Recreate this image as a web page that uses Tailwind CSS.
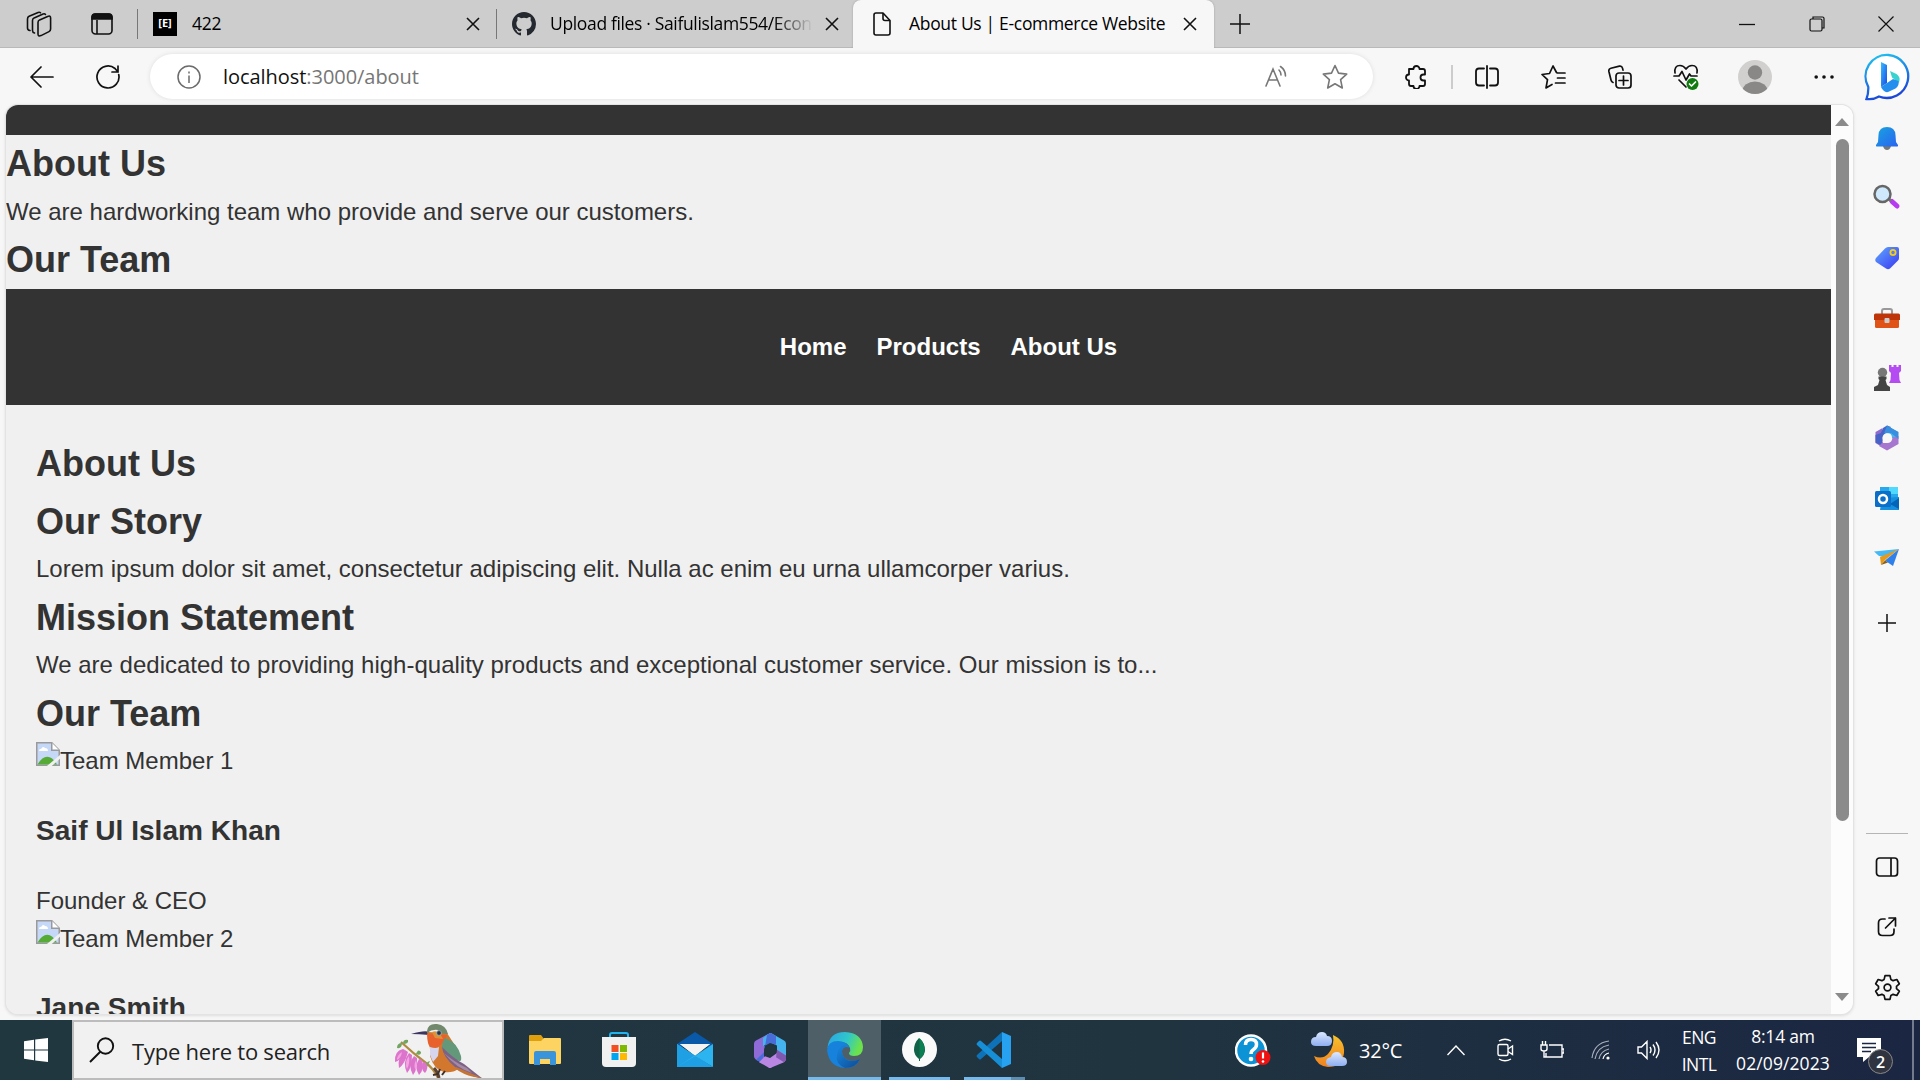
<!DOCTYPE html>
<html lang="en">
<head>
<meta charset="utf-8">
<title>About Us | E-commerce Website</title>
<script src="https://cdn.jsdelivr.net/npm/@tailwindcss/browser@4"></script>
</head>
<body class="w-[1920px] h-[1080px] overflow-hidden bg-[#f7f7f7] font-['Open_Sans',sans-serif] text-black flex flex-col">

<!-- Tab strip -->
<header class="h-12 shrink-0 bg-[#cdcdcd] flex items-center border-b border-[#b9b9b9] relative">
  <svg class="ml-[26px] w-[26px] h-[26px] shrink-0" viewBox="0 0 26 26" fill="none" stroke="#111" stroke-width="1.6" stroke-linejoin="round" stroke-linecap="round"><path d="M12 11.5q0-1.8 1.6-2.6l8-3.5q3-1.2 3 1.6v11q0 1.8-1.6 2.6l-8 4q-3 1.2-3-1.6z"/><path d="M8.500 22q-2-.6-2-2.600v-9.900q0-1.800 1.600-2.600l9-4q1.600-.5 2.400.5"/><path d="M4 19.500q-2.500-.5-2.500-2.600v-9q0-1.800 1.600-2.600l9-3.800q1.600-.5 2.400.3"/></svg>
  <svg class="ml-[39px] w-[22px] h-[22px] shrink-0" viewBox="0 0 22 22" fill="none" stroke="#111" stroke-width="1.6"><rect x="1" y="1" width="20" height="20" rx="3.500"/><path d="M1 6V4q0-3 3-3h14q3 0 3 3v2z" fill="#111"/><path d="M6 7v14"/></svg>
  <div class="ml-6 w-px h-[30px] bg-[#777] shrink-0"></div>
  <div class="ml-[15px] size-6 bg-black text-white font-bold text-[11px] flex items-center justify-center shrink-0">[E]</div>
  <div class="ml-[15px] w-[274px] text-[17.500px] tracking-[-0.300px] shrink-0">422</div>
  <svg class="w-[14px] h-[14px] shrink-0" viewBox="0 0 14 14" stroke="#111" stroke-width="1.6"><path d="M1 1l12 12M13 1L1 13"/></svg>
  <div class="ml-[16px] w-px h-[30px] bg-[#777] shrink-0"></div>
  <svg class="ml-[15px] size-6 shrink-0" viewBox="0 0 16 16" fill="#24292f"><path d="M8 0C3.580 0 0 3.580 0 8c0 3.540 2.290 6.530 5.470 7.590.4.070.55-.17.55-.38 0-.19-.010-.82-.010-1.490-2.010.37-2.530-.49-2.690-.94-.090-.23-.48-.94-.82-1.130-.28-.15-.68-.52-.010-.53.63-.010 1.080.58 1.230.82.72 1.210 1.870.87 2.330.66.070-.52.28-.87.51-1.070-1.780-.2-3.640-.89-3.640-3.950 0-.87.31-1.590.82-2.150-.080-.2-.36-1.020.080-2.120 0 0 .67-.21 2.200.82a7.600 7.600 0 014 0c1.530-1.040 2.200-.82 2.200-.82.44 1.100.16 1.920.080 2.120.51.56.82 1.270.82 2.150 0 3.070-1.870 3.750-3.650 3.950.29.25.54.73.54 1.480 0 1.070-.010 1.930-.010 2.200 0 .21.15.46.55.38A8 8 0 0016 8c0-4.420-3.580-8-8-8z"/></svg>
  <div class="ml-[14px] w-[263px] overflow-hidden whitespace-nowrap text-[17.500px] tracking-[-0.350px] shrink-0 mask-r-from-85% mask-r-to-100%">Upload files · Saifulislam554/Econ</div>
  <svg class="ml-[12px] w-[14px] h-[14px] shrink-0" viewBox="0 0 14 14" stroke="#111" stroke-width="1.6"><path d="M1 1l12 12M13 1L1 13"/></svg>
  <div class="ml-[14px] w-[361px] h-12 -mb-px bg-[#f7f7f7] rounded-t-lg flex items-center shrink-0 shadow-[0_0_2px_#999] [clip-path:inset(0_-3px_0_-3px)]">
    <svg class="ml-5 w-[18px] h-6 shrink-0" viewBox="0 0 18 24" fill="none" stroke="#111" stroke-width="1.6" stroke-linejoin="round"><path d="M3 1h7l7 7.500V21q0 2-2 2H3q-2 0-2-2V3q0-2 2-2z"/><path d="M10 1v5.500q0 2 2 2h5"/></svg>
    <div class="ml-[18px] w-[274px] whitespace-nowrap text-[17.500px] tracking-[-0.320px] shrink-0 -mt-px">About Us | E-commerce Website</div>
    <svg class="w-[14px] h-[14px] shrink-0" viewBox="0 0 14 14" stroke="#111" stroke-width="1.6"><path d="M1 1l12 12M13 1L1 13"/></svg>
  </div>
  <svg class="ml-[15px] w-[22px] h-[22px] shrink-0" viewBox="0 0 22 22" stroke="#111" stroke-width="1.500"><path d="M11 1v20M1 11h20"/></svg>
  <svg class="ml-auto w-[16px] h-4" viewBox="0 0 16 16" stroke="#111" stroke-width="1.300"><path d="M0 8.500h16"/></svg>
  <svg class="ml-[54px] w-4 h-4" viewBox="0 0 16 16" fill="none" stroke="#111" stroke-width="1.200"><rect x="1" y="3" width="12" height="12" rx="1.500"/><path d="M4 3V1h9.500q1.500 0 1.500 1.500V12h-2"/></svg>
  <svg class="ml-[53px] mr-[26px] w-4 h-4" viewBox="0 0 16 16" stroke="#111" stroke-width="1.200"><path d="M.5.5l15 15M15.500.5l-15 15"/></svg>
</header>

<!-- Toolbar -->
<nav class="h-[57px] shrink-0 flex items-center text-[#111]">
  <svg class="ml-[30px] w-6 h-6 shrink-0" viewBox="0 0 24 24" fill="none" stroke="#111" stroke-width="1.700" stroke-linecap="round" stroke-linejoin="round"><path d="M23 12H1M11 2L1 12l10 10"/></svg>
  <svg class="ml-[42px] w-6 h-6 shrink-0" viewBox="0 0 24 24" fill="none" stroke="#111" stroke-width="1.700" stroke-linecap="round" stroke-linejoin="round"><path d="M22.700 9.500A11 11 0 1 1 19 3.500l3 3.500M22 1v6h-6"/></svg>
  <div class="ml-[30px] w-[1223px] h-[45px] rounded-full bg-white shadow-[0_0_5px_rgba(0,0,0,0.100)] flex items-center shrink-0">
    <svg class="ml-[27px] w-6 h-6 shrink-0" viewBox="0 0 24 24" fill="none" stroke="#6b6b6b" stroke-width="1.500"><circle cx="12" cy="12" r="11"/><path d="M12 10.500V18M12 6.500v2"/></svg>
    <div class="ml-[22px] text-[20px] tracking-[-0.050px] whitespace-nowrap">localhost<span class="text-[#767676]">:3000/about</span></div>
    <svg class="ml-auto w-6 h-6 shrink-0" viewBox="0 0 24 24" fill="none" stroke="#777" stroke-width="1.600" stroke-linecap="round"><path d="M1 21L8 4l7 17M3.500 15h9M14 5q2 2 2 5M15.500 1.500q5 3.500 5 9.500"/></svg>
    <svg class="ml-[33px] mr-[25px] w-[26px] h-[26px] shrink-0" viewBox="0 0 26 26" fill="none" stroke="#777" stroke-width="1.600" stroke-linejoin="round"><path d="M13 1.500l3.500 7.600 8.200 1-6.100 5.600 1.700 8.300-7.300-4.200-7.300 4.200 1.700-8.300-6.100-5.600 8.200-1z"/></svg>
  </div>
  <svg class="ml-[31px] w-6 h-6 shrink-0" viewBox="0 0 24 24" fill="none" stroke="#111" stroke-width="1.800" stroke-linejoin="round"><path d="M5 4h4.500a3 3 0 0 1 6 0H19q2 0 2 2v3.500h-1.500a2.800 2.800 0 0 0 0 6H21V19q0 2-2 2h-3.500a3 3 0 0 1-6 0H7q-2 0-2-2v-3.500a3 3 0 0 1 0-6V4z"/></svg>
  <div class="ml-[23px] w-[2px] h-6 bg-[#ccc]"></div>
  <svg class="ml-[22px] w-6 h-6 shrink-0" viewBox="0 0 24 24" fill="none" stroke="#111" stroke-width="1.800" stroke-linecap="round"><path d="M12 1v22M9 3.500H4q-3 0-3 3v11q0 3 3 3h5M15 3.500h5q3 0 3 3v11q0 3-3 3h-5"/></svg>
  <svg class="ml-[42px] w-[25px] h-6 shrink-0" viewBox="0 0 25 24" fill="none" stroke="#111" stroke-width="1.700" stroke-linecap="round" stroke-linejoin="round"><path d="M15.500 7.500L12 1 8.500 8.500 1 9.500l5.500 5.200L5 23l6-3.500M16.500 8H24M16.500 13H24M14.500 18H24"/></svg>
  <svg class="ml-[42px] w-6 h-6 shrink-0" viewBox="0 0 24 24" fill="none" stroke="#111" stroke-width="1.700" stroke-linecap="round" stroke-linejoin="round"><rect x="8" y="8" width="15" height="15" rx="3"/><path d="M15.500 11v9M11 15.500h9M5 17.500q-1.500-.5-2-2.500L.9 6.500q-.5-2.500 2-3.200l8.500-2.200q2.500-.5 3.100 2l.5 2"/></svg>
  <svg class="ml-[41px] w-[26px] h-7 shrink-0" viewBox="0 0 26 28" fill="none" stroke="#111" stroke-width="1.700" stroke-linecap="round" stroke-linejoin="round"><path d="M2 10Q1 2.500 7 2.500q3.500 0 6 3.500 2.500-3.500 6-3.500 6 0 5 7.500M1 13h5l3-4.500 4 8.500 3.500-6 1.500 2h6M6 17l7 7"/><circle cx="19.500" cy="21" r="6" fill="#107c10" stroke="none"/><path d="M16.500 21l2 2 4-4" stroke="#fff"/></svg>
  <svg class="ml-[39px] w-[34px] h-[34px] shrink-0" viewBox="0 0 34 34"><defs><clipPath id="av"><circle cx="17" cy="17" r="17"/></clipPath></defs><g clip-path="url(#av)"><path fill="#d2d0ce" d="M0 0h34v34H0z"/><circle cx="17" cy="12.500" r="7.200" fill="#8a8886"/><ellipse cx="17" cy="31" rx="12.500" ry="9.500" fill="#8a8886"/></g></svg>
  <svg class="ml-[42px] w-5 h-5 shrink-0" viewBox="0 0 20 20" fill="#111"><circle cx="2.200" cy="10" r="1.800"/><circle cx="10" cy="10" r="1.800"/><circle cx="18" cy="10" r="1.800"/></svg>
  <svg class="ml-[30px] w-[48px] h-[48px] shrink-0" viewBox="0 0 48 48"><defs><linearGradient id="b1" x1="0" y1="0" x2=".3" y2="1"><stop stop-color="#20c8f2"/><stop offset="1" stop-color="#1b48d8"/></linearGradient><linearGradient id="b2" x1="0" y1="0" x2="1" y2="1"><stop stop-color="#37bdff"/><stop offset="1" stop-color="#174ae4"/></linearGradient></defs><path d="M24.500 2A21.500 21.500 0 1 1 15 43.500Q9 47 2.500 46q2-5.500 1.800-12A21.500 21.500 0 0 1 24.500 2z" fill="#fff" stroke="url(#b1)" stroke-width="2.300"/><path d="M17 9l6 3v18l-6 4z" fill="url(#b2)"/><path d="M26 18l6.500 3Q37 24 35 30L28 24.500z" fill="#39d3cf"/><path d="M17 34l6-4 6-4 5.500 2q1 5-3 7.500L24 39q-4 1-7-5z" fill="#238eee"/></svg>
</nav>

<!-- Page frame and side bar -->
<div class="h-[915px] shrink-0 flex">
  <div class="ml-[6px] w-[1847px] h-[909px] rounded-xl overflow-hidden flex shadow-[0_0_0_1px_#e3e3e3,0_1px_3px_1px_#ddd] shrink-0">
    <main class="w-[1825px] h-[909px] overflow-hidden bg-[#f0f0f0] text-[#333] font-['Liberation_Sans',Arial,sans-serif] text-2xl leading-[38.400px]">
      <div class="h-[30px] bg-[#333]"></div>
      <h2 class="text-4xl leading-[57.600px] font-bold">About Us</h2>
      <p>We are hardworking team who provide and serve our customers.</p>
      <h2 class="text-4xl leading-[57.600px] font-bold">Our Team</h2>
      <div class="h-[116.400px] bg-[#333] text-white font-bold flex items-center justify-center gap-[30px] pl-[60px]">
        <a>Home</a><a>Products</a><a>About Us</a>
      </div>
      <section class="p-[30px]">
        <h2 class="text-4xl leading-[57.600px] font-bold">About Us</h2>
        <h2 class="text-4xl leading-[57.600px] font-bold">Our Story</h2>
        <p>Lorem ipsum dolor sit amet, consectetur adipiscing elit. Nulla ac enim eu urna ullamcorper varius.</p>
        <h2 class="text-4xl leading-[57.600px] font-bold">Mission Statement</h2>
        <p>We are dedicated to providing high-quality products and exceptional customer service. Our mission is to...</p>
        <h2 class="text-4xl leading-[57.600px] font-bold">Our Team</h2>
        <div class="flex items-start h-[38.400px]">
          <svg class="size-6 shrink-0" viewBox="0 0 16 16"><path d="M.5.5h10l5 5v10H.5z" fill="#c5d8f8" stroke="#9a9a9a"/><path d="M10.500.5v5h5" fill="#fff" stroke="#9a9a9a"/><path d="M2 6q0-1.500 1.500-1.500Q4.500 2.500 6 4q2 0 2 2z" fill="#fff"/><path d="M1 15q3-5.200 6.500-5.200T14 15z" fill="#56ab37"/><path d="M7.300 16L16 8.600v2.600L10.500 16z" fill="#f0f0f0"/></svg>Team Member 1
        </div>
        <h3 class="text-[28.080px] leading-[44.930px] my-[28.080px] font-bold">Saif Ul Islam Khan</h3>
        <p>Founder &amp; CEO</p>
        <div class="flex items-start h-[38.400px]">
          <svg class="size-6 shrink-0" viewBox="0 0 16 16"><path d="M.5.5h10l5 5v10H.5z" fill="#c5d8f8" stroke="#9a9a9a"/><path d="M10.500.5v5h5" fill="#fff" stroke="#9a9a9a"/><path d="M2 6q0-1.500 1.500-1.500Q4.500 2.500 6 4q2 0 2 2z" fill="#fff"/><path d="M1 15q3-5.200 6.500-5.200T14 15z" fill="#56ab37"/><path d="M7.300 16L16 8.600v2.600L10.500 16z" fill="#f0f0f0"/></svg>Team Member 2
        </div>
        <h3 class="text-[28.080px] leading-[44.930px] mt-[27.200px] font-bold">Jane Smith</h3>
      </section>
    </main>
    <div class="w-[22px] bg-[#fcfcfc] flex flex-col items-center">
      <svg class="mt-[13px] w-[14px] h-2" viewBox="0 0 14 8" fill="#8b8b8b"><path d="M7 0l7 8H0z"/></svg>
      <div class="mt-[13px] w-[13px] h-[682px] rounded-full bg-[#8b8b8b]"></div>
      <svg class="mt-[172px] w-[14px] h-2" viewBox="0 0 14 8" fill="#8b8b8b"><path d="M7 8l7-8H0z"/></svg>
    </div>
  </div>

  <aside class="ml-px w-[66px] pt-[3px] flex flex-col items-center">
    <div class="h-[60px] flex items-center"><svg class="w-7 h-7" viewBox="0 0 28 28"><defs><linearGradient id="g1" x1="0" y1="0" x2="1" y2="1"><stop stop-color="#18a4e0"/><stop offset="1" stop-color="#2a62f0"/></linearGradient></defs><path d="M10 22h8q-1 4-4 4t-4-4z" fill="#777"/><path d="M14 3q8 0 8.500 8l.5 7 2 3q.5 1.500-1 1.500H4q-1.500 0-1-1.500l2-3 .5-7Q6 3 14 3z" fill="url(#g1)"/></svg></div>
    <div class="h-[60px] flex items-center"><svg class="w-7 h-7" viewBox="0 0 28 28"><path d="M19 17.500l5 4.500" stroke="#b83af0" stroke-width="5" stroke-linecap="round"/><path d="M15 14l3 3" stroke="#777" stroke-width="3"/><circle cx="9.500" cy="10" r="8" fill="#cfe8fb" stroke="#666" stroke-width="2.500"/></svg></div>
    <div class="h-[60px] flex items-center"><svg class="w-7 h-7" viewBox="0 0 28 28"><defs><linearGradient id="g2" x1="0" y1="0" x2="1" y2="1"><stop stop-color="#5fa8ff"/><stop offset="1" stop-color="#3a38f0"/></linearGradient></defs><path d="M15 3h9q2 0 2 2v9q0 1.500-1 2.500l-8 8q-2 1.500-4 0L3 18q-1.500-2 0-4L12 4.500Q13.500 3 15 3z" fill="url(#g2)"/><circle cx="20" cy="8.500" r="2.600" fill="#5a7aff" stroke="#f5cf14" stroke-width="1.800"/></svg></div>
    <div class="h-[60px] flex items-center"><svg class="w-7 h-7" viewBox="0 0 28 28"><path d="M9 10V7q0-2 2-2h6q2 0 2 2v3" fill="none" stroke="#999" stroke-width="2"/><rect x="2" y="14" width="24" height="10" rx="1.500" fill="#e05317"/><path d="M2.500 9.500h23q1.500 0 1.500 1.500v5H1v-5q0-1.500 1.500-1.500z" fill="#bd3509"/><rect x="11.500" y="14" width="5" height="5" rx="1" fill="#ccc"/></svg></div>
    <div class="h-[60px] flex items-center"><svg class="w-7 h-7" viewBox="0 0 28 28"><path d="M16 1h2.500v2h2V1h3v2h2V1H28v6l-2 2 .5 7 1.500 3H16l1.500-3L18 9l-2-2z" fill="#b44cf2"/><circle cx="9.500" cy="8.500" r="4.700" fill="#777"/><path d="M5.500 12.500h8V15l-1 1 1.500 5 3 2v4H1v-4l4-2 1.500-5-1-1z" fill="#444"/></svg></div>
    <div class="h-[60px] flex items-center"><svg class="w-7 h-7" viewBox="0 0 28 28"><path d="M14 2l11 6v7l-6-1q0-5-5-5H9z" fill="#42b8ef"/><path d="M14 1.500L9.500 4v14L14 24l-5-1-6.500-4V8z" fill="#8d6cce"/><path d="M14 1.500l4 1.500-6 7q-3 2-2.500 5.500l-1 6-6-3V11L8 9l2-5z" fill="#4763c5"/><path d="M9 19h5q5 0 5.500-5.500L25.500 12v8L14 26.500l-8-4.500z" fill="#a577cf"/><path d="M14 1.500L25.500 8v7L18 9l-7 .5z" fill="#388fdf"/><circle cx="14" cy="14" r="4.500" fill="#f7f7f7"/></svg></div>
    <div class="h-[60px] flex items-center"><svg class="w-7 h-7" viewBox="0 0 28 28"><path d="M7 3h18v12H7z" fill="#28a8ea"/><path d="M16 3h9v7h-9z" fill="#50d9ff"/><path d="M9 14l17-1v13H7z" fill="#1490df"/><path d="M26 14v11l-9-5z" fill="#0364b8"/><rect x="2" y="7" width="16" height="16" rx="1.500" fill="#0b6fc9"/><circle cx="10" cy="15" r="4" fill="none" stroke="#fff" stroke-width="2.500"/></svg></div>
    <div class="h-[60px] flex items-center"><svg class="w-7 h-7" viewBox="0 0 28 28"><path d="M1 7.500L26 5 13 13 6 12z" fill="#45b9f5"/><path d="M26 5L7 13l1 8 4-5z" fill="#e79a18"/><path d="M26 5l-6 17-8-5.500z" fill="#2f80ea"/><path d="M8 21l4-4.500 3 2z" fill="#8b5c14"/></svg></div>
    <div class="mt-[5px] h-[60px] flex items-center"><svg class="w-[18px] h-[18px]" viewBox="0 0 18 18" stroke="#111" stroke-width="1.500"><path d="M9 0v18M0 9h18"/></svg></div>
    <div class="mt-[180px] w-[42px] h-px bg-[#b5b5b5] shrink-0"></div>
    <div class="mt-[3px] h-[60px] flex items-center"><svg class="w-6 h-6" viewBox="0 0 24 24" fill="none" stroke="#111" stroke-width="1.700"><rect x="1.500" y="3" width="21" height="18" rx="3"/><path d="M16 3v18"/></svg></div>
    <div class="h-[60px] flex items-center"><svg class="w-6 h-6" viewBox="0 0 24 24" fill="none" stroke="#111" stroke-width="1.700" stroke-linecap="round" stroke-linejoin="round"><path d="M10 4H7.500q-4 0-4 4v8.500q0 4 4 4H15q4 0 4-4V14M10.500 13L20.500 3M14 3h6.500v8"/></svg></div>
    <div class="h-[60px] flex items-center"><svg class="w-[27px] h-[27px]" viewBox="0 0 24 24" fill="none" stroke="#111" stroke-width="1.500" stroke-linejoin="round"><path d="M9.800 1.500h4.400l.8 3.300 2 1.100 3.300-1 2.200 3.800-2.500 2.300v2l2.500 2.300-2.200 3.800-3.300-1-2 1.100-.8 3.300H9.800L9 19.200l-2-1.100-3.300 1-2.200-3.800L4 13v-2L1.500 8.700l2.200-3.800 3.300 1 2-1.100z"/><circle cx="12" cy="12" r="3"/></svg></div>
  </aside>
</div>

<!-- Taskbar -->
<footer class="h-[60px] shrink-0 flex items-center bg-linear-to-r from-[#21373f] via-[#203440] via-60% to-[#1b2642] text-white">
  <div class="w-[72px] h-[60px] flex items-center justify-center shrink-0"><svg class="w-6 h-6" viewBox="0 0 24 24" fill="#fff"><path d="M0 3.200l10-1.400v9.600H0zM11.200 1.600L24 0v11.400H11.200zM0 12.600h10v9.600L0 20.800zM11.200 12.600H24V24l-12.800-1.600z"/></svg></div>
  <div class="w-[432px] h-[60px] bg-[#f1f1f1] border-2 border-[#bcbcbc] flex items-center text-[#222] shrink-0">
    <svg class="ml-[15px] w-[26px] h-[26px] shrink-0" viewBox="0 0 26 26" fill="none" stroke="#111" stroke-width="1.900"><circle cx="16.500" cy="9" r="7.700"/><path d="M11.500 14.500L1 25"/></svg>
    <div class="ml-[17px] w-[250px] text-[22px] tracking-[-0.230px] whitespace-nowrap shrink-0 pt-0.5">Type here to search</div>
    <!-- hummingbird on a flowering twig -->
    <svg class="ml-[12px] w-[92px] h-14 shrink-0" viewBox="0 0 92 56">
      <path d="M7 20Q20 32 32 41q8 6 12 15" fill="none" stroke="#b08b3e" stroke-width="2.200"/>
      <path d="M40 46q4 4 5 10" stroke="#5a4335" stroke-width="3" fill="none"/>
      <g fill="#73a562"><path d="M8 21q-5 0-5 5 5 1 5-5zM9 22q0-5 5-4 1 4-5 4zM22 32q2-6 5-2 0 4-5 2zM33 45q-2-5 3-6z"/></g>
      <g fill="#dd74cc"><path d="M9 27q-9 2-8 13 6-1 10-12z"/><path d="M11 28q-8 7-6 18 6-4 9-16z"/><path d="M15 31q-7 9-2 20 5-5 5-18z"/><path d="M20 34q-7 8-1 19 5-6 4-17z"/><path d="M25 37q-5 8 0 16 6-6 3-15z"/><path d="M29 40q-3 7 2 11 4-5 1-10z"/></g>
      <g fill="#f2a4e2"><path d="M8 30q-5 3-5 8 4-2 5-8zM15 34q-5 6-2 13 3-5 2-13zM22 38q-3 6 0 11 2-5 0-11z"/></g>
      <path d="M17 12q14-4 18-2v3q-10-1-18-1z" fill="#3c3560"/>
      <path d="M33 10q4 16 3 24 4 14 14 16 9 1 14-3l-2-22L53 11z" fill="#d2782e"/>
      <path d="M33 12q0 12 5 15 12-3 15-14z" fill="#e8612d"/>
      <path d="M33 9Q34 1 43 2q9 1 11 10-10 0-10-4-6-1-11 3z" fill="#71886c"/>
      <path d="M38 10q5-2 8 2l3 5-8-1z" fill="#de9238"/>
      <circle cx="45" cy="11" r="2.400" fill="#2a3340" stroke="#9bb7c8" stroke-width=".8"/>
      <path d="M36 25q6 2 9 0l-1 9-5 6-3-7z" fill="#d7d4ee"/>
      <path d="M51 16q12 4 16 18 1 6-2 5-14-4-17-13 0-6 3-10z" fill="#63987b"/>
      <path d="M48 25q12 12 22 17l19 15q-14-3-28-12-12-10-13-20z" fill="#7d6186"/>
      <path d="M50 31q12 15 28 20l-5-5Q60 40 50 31z" fill="#a48aa5"/>
      <path d="M62 45q14 6 26 11l-8-1q-12-3-18-8z" fill="#c47435"/>
      <path d="M46 47l-2 5-5 1M51 49l-3 4" stroke="#40302a" stroke-width="2" fill="none"/>
    </svg>
  </div>
  <svg class="ml-[25px] w-8 h-[30px] shrink-0" viewBox="0 0 32 30"><path d="M0 8V1q0-1 1-1h11l3 4-3 4z" fill="#e0a00c"/><path d="M0 6h12l3-3h16q1 0 1 1v24q0 1-1 1H1q-1 0-1-1z" fill="#fdd462"/><path d="M5 30V18q0-2 2-2h18q2 0 2 2v12h-6v-6H11v6z" fill="#3994dc"/></svg>
  <svg class="ml-[40px] w-9 h-9 shrink-0" viewBox="0 0 36 36"><path d="M9 7V3q0-2 2-2h14q2 0 2 2v4" fill="none" stroke="#21b3ee" stroke-width="2"/><path d="M1 5h34v26q0 4-4 4H5q-4 0-4-4z" fill="#f1f1f2"/><path d="M10.500 13h7v7h-7z" fill="#f25022"/><path d="M19 13h7v7h-7z" fill="#7fba00"/><path d="M10.500 21h7v7h-7z" fill="#00a4ef"/><path d="M19 21h7v7h-7z" fill="#ffb900"/></svg>
  <svg class="ml-[40px] w-9 h-9 shrink-0" viewBox="0 0 36 36"><path d="M0 12L18 0l18 12v3H0z" fill="#0a58a8"/><path d="M3 12h30L18 24z" fill="#f3f3f3"/><path d="M0 12l18 12L0 35z" fill="#32b5ed"/><path d="M0 35V12l36 23z" fill="#1f9fe4"/><path d="M36 12v23L18 24z" fill="#2cb4f0"/><path d="M36 12L18 24 0 35z" fill="#38c3f6"/><path d="M3 12h30L18 23z" fill="#f3f3f3"/></svg>
  <svg class="ml-[41px] w-8 h-[35px] shrink-0" viewBox="0 0 32 42" preserveAspectRatio="none"><path d="M16 0L2 9Q0 10 0 13v15q0 3 2 4l6 4 2-4V15q0-2 2-3l9-6z" fill="#8f6bd8"/><path d="M13 2l4-2 13 9q2 1 2 4v15l-9-6v-7l-7-4-7 5V6z" fill="#45b3ed"/><path d="M13 2l4-2 5 4v10l-6-2-6 4v10l-2 10-6-4 8-9z" fill="#496dd8"/><path d="M5 35l6-7 5 2 7-6v-4l9 7v4q0 2-2 4l-12 6q-2 2-4 0z" fill="#ba86e4"/><path d="M23 20l9 7v4q0 2-2 4l-8-6z" fill="#8058b0"/><circle cx="16" cy="21" r="6" fill="#22363f"/></svg>
  <div class="ml-[22px] w-[73px] h-[60px] bg-[#4f5f67] border-b-[3px] border-[#76b9ed] flex items-center justify-center shrink-0 pt-[3px]">
    <svg class="w-9 h-9" viewBox="0 0 36 36"><defs><linearGradient id="e1" x1="0" y1="0" x2="1" y2=".3"><stop stop-color="#2aa4e8"/><stop offset=".6" stop-color="#30c8c8"/><stop offset="1" stop-color="#6be24c"/></linearGradient><linearGradient id="e2" x1="0" y1="0" x2="1" y2="1"><stop stop-color="#1688e0"/><stop offset="1" stop-color="#0e4a95"/></linearGradient></defs><path d="M.5 16Q2 0 18 0q17 1 18 15 0 9-9 9-5 0-5-3 2-2 1-5-2-6-9-6Q5 9 .5 16z" fill="url(#e1)"/><path d="M0 18Q1 9 11 9q8 0 12 7-6-3-8 3 0 9 10 10 5 0 8-2Q29 36 18 36 2 35 0 18z" fill="#1682dc"/><path d="M13 15q2-3 7-1-6 1-5 7 2 8 10 8 4 0 8-2-4 9-15 9Q8 32 10 22q1-5 3-7z" fill="url(#e2)"/></svg>
  </div>
  <div class="ml-2 w-[61px] h-[60px] border-b-[3px] border-[#76b9ed] flex items-center justify-center shrink-0 pt-px">
    <svg class="w-[35px] h-[35px]" viewBox="0 0 35 35"><circle cx="17.500" cy="17.500" r="17.500" fill="#fafafa"/><path d="M17 6q6 5 6 12 0 5-5 9v2h-1v-2q-5-4-5-9 0-7 5-12z" fill="#116149"/><path d="M17.500 6v21q5-4 5-9 0-7-5-12z" fill="#0b8052"/></svg>
  </div>
  <div class="ml-[14px] w-[61px] h-[60px] flex flex-col shrink-0">
    <div class="h-[57px] flex items-center pl-3 pt-[3px]"><svg class="w-9 h-9" viewBox="0 0 36 36"><path d="M26 0l9 4v28l-9 4z" fill="#27a2f0"/><path d="M26 0v9L5 27q-1 1-2 0l-2-2q-1-1 0-2z" fill="#0e72b8"/><path d="M26 36v-9L5 9Q4 8 3 9l-2 2q-1 1 0 2z" fill="#168fd6"/></svg></div>
    <div class="flex"><div class="w-[47px] h-[3px] bg-[#76b9ed]"></div><div class="w-[14px] h-[3px] bg-[#5e8db2]"></div></div>
  </div>
  <svg class="ml-[210px] w-9 h-[33px] shrink-0" viewBox="0 0 36 33"><circle cx="16" cy="16.500" r="15" fill="#0c93d6" stroke="#fff" stroke-width="2.500"/><path d="M10.500 11q0-5.500 5.500-5.500t5.500 5q0 3-3 5-2.500 1.500-2.500 4.500" fill="none" stroke="#fff" stroke-width="3.500"/><circle cx="16" cy="25" r="2.300" fill="#fff"/><circle cx="28" cy="23.500" r="7.500" fill="#ee1111"/><path d="M28 18.500v6" stroke="#fff" stroke-width="2.200"/><circle cx="28" cy="27.500" r="1.300" fill="#fff"/></svg>
  <svg class="ml-[40px] w-9 h-9 shrink-0" viewBox="0 0 36 36"><defs><linearGradient id="m" x1="0" y1="0" x2="0" y2="1"><stop stop-color="#f8c22c"/><stop offset="1" stop-color="#f08020"/></linearGradient><linearGradient id="c" x1="0" y1="0" x2="0" y2="1"><stop stop-color="#dbe8ff"/><stop offset="1" stop-color="#8eaef0"/></linearGradient></defs><path d="M22 3q12 5 11 18-2 14-16 14Q6 34 3 24q8 4 14-2 7-8 5-19z" fill="url(#m)"/><path d="M5 14q-5 0-5-4 0-5 5-5 1-5 6-5 4 0 5 4 5 0 5 5t-5 5z" fill="url(#c)"/><path d="M20 34q-5 0-5-4t5-5q1-5 6-5 4 0 5 5 5 0 5 5 0 4-5 4z" fill="url(#c)"/></svg>
  <div class="ml-[12px] w-[56px] text-[20px] tracking-[-0.200px] whitespace-nowrap shrink-0 pt-0.5">32°C</div>
  <svg class="ml-[32px] w-[18px] h-[11px] shrink-0" viewBox="0 0 18 11" fill="none" stroke="#fff" stroke-width="1.400"><path d="M.5 10L9 1l8.500 9"/></svg>
  <svg class="ml-[31px] w-[18px] h-6 shrink-0" viewBox="0 0 18 24" fill="none" stroke="#fff" stroke-width="1.400"><rect x="2" y="6.500" width="10" height="11" rx="1.500"/><path d="M12 11l4.500-3v8.500L12 13.500M3 3q6-3.500 12 0M3 21q6 3.500 12 0"/></svg>
  <svg class="ml-[26px] w-6 h-5 shrink-0" viewBox="0 0 24 20" fill="none" stroke="#fff" stroke-width="1.400"><path d="M9 5h13v12H6v-4M22 9h2v4h-2M1 5h6v4q0 2-3 2t-3-2zM2.500 1v4M5.500 1v4M4 11v6h2"/></svg>
  <svg class="ml-[27px] w-5 h-5 shrink-0" viewBox="0 0 20 20" fill="none" stroke="#fff" stroke-width="1.200"><g stroke="#aab0bc"><path d="M1 18Q3 3 18 1"/><path d="M4 19Q6 7 18 5"/><path d="M8 19Q9.500 11 18 9"/></g><path d="M12 19q1-5 6-6"/><circle cx="17" cy="18" r="1.600" fill="#fff" stroke="none"/></svg>
  <svg class="ml-[26px] w-6 h-5 shrink-0" viewBox="0 0 24 20" fill="none" stroke="#fff" stroke-width="1.400"><path d="M1 7h3.500L10 1.500v17L4.500 13H1zM13 7q2 3 0 6M16 4.500q4 5.500 0 11M19 2q6 8 0 16"/></svg>
  <div class="ml-[17px] w-[42px] flex flex-col items-center text-[17.500px] leading-[27px] tracking-[-0.600px] shrink-0 pt-0.5"><span>ENG</span><span>INTL</span></div>
  <div class="ml-[12px] w-[102px] flex flex-col items-center text-[17.500px] leading-[27px] whitespace-nowrap shrink-0"><span class="tracking-[-0.200px]">8:14 am</span><span class="tracking-[0.100px]">02/09/2023</span></div>
  <div class="ml-[23px] w-9 h-10 relative shrink-0">
    <svg class="w-6 h-6 mt-2" viewBox="0 0 24 24"><path d="M0 0h24v19H12l-6 5v-5H0z" fill="#fff"/><path d="M5 5.500h14M5 9.500h14M5 13.500h9" stroke="#1b2642" stroke-width="1.300"/></svg>
    <div class="absolute left-[11px] top-[19px] size-[25px] rounded-full bg-[#2f3440] border border-[#888] text-[16px] font-semibold flex items-center justify-center">2</div>
  </div>
  <div class="ml-auto mr-[6px] w-[2px] h-[60px] bg-[#737b8c]"></div>
</footer>
</body>
</html>
